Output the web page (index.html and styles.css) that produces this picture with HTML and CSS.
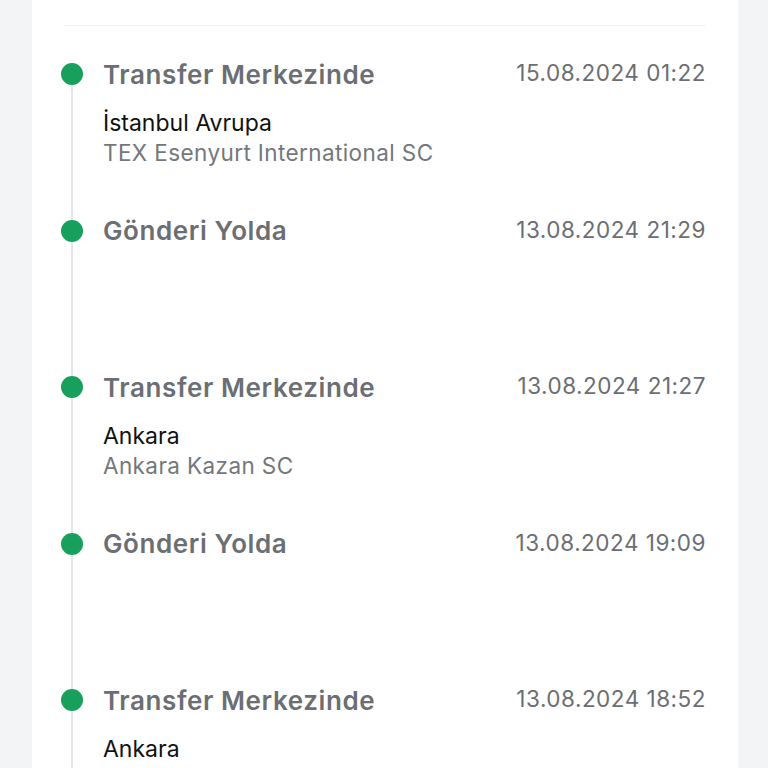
FILE: index.html
```html
<!DOCTYPE html>
<html lang="tr">
<head>
    <meta charset="UTF-8">
    <meta name="viewport" content="width=device-width, initial-scale=1.0">
    <title>Gönderi Takibi</title>
    <link rel="stylesheet" href="styles.css">
</head>
<body>

    <div class="card">
        <div class="divider"></div>

        <!-- Shipment movements -->
        <ul class="timeline">
            <li class="step">
                <div class="rail"><span class="dot"></span><span class="line"></span></div>
                <div class="info">
                    <div class="head">
                        <span class="status">Transfer Merkezinde</span>
                        <span class="date">15.08.2024 01:22</span>
                    </div>
                    <p class="city">İstanbul Avrupa</p>
                    <p class="branch">TEX Esenyurt International SC</p>
                </div>
            </li>
            <li class="step">
                <div class="rail"><span class="dot"></span><span class="line"></span></div>
                <div class="info">
                    <div class="head">
                        <span class="status">Gönderi Yolda</span>
                        <span class="date">13.08.2024 21:29</span>
                    </div>
                </div>
            </li>
            <li class="step">
                <div class="rail"><span class="dot"></span><span class="line"></span></div>
                <div class="info">
                    <div class="head">
                        <span class="status">Transfer Merkezinde</span>
                        <span class="date">13.08.2024 21:27</span>
                    </div>
                    <p class="city">Ankara</p>
                    <p class="branch">Ankara Kazan SC</p>
                </div>
            </li>
            <li class="step">
                <div class="rail"><span class="dot"></span><span class="line"></span></div>
                <div class="info">
                    <div class="head">
                        <span class="status">Gönderi Yolda</span>
                        <span class="date">13.08.2024 19:09</span>
                    </div>
                </div>
            </li>
            <li class="step">
                <div class="rail"><span class="dot"></span><span class="line"></span></div>
                <div class="info">
                    <div class="head">
                        <span class="status">Transfer Merkezinde</span>
                        <span class="date">13.08.2024 18:52</span>
                    </div>
                    <p class="city">Ankara</p>
                </div>
            </li>
        </ul>
    </div>

</body>
</html>
```

FILE: styles.css
```css
body {
    font-family: Inter, 'Noto Sans', sans-serif;
    background: #f3f4f6;
    margin: 0;
    height: 768px;
    overflow: hidden;
}

.card {
    background: white;
    margin: 0 30px 0 32px;
    padding: 0 32px;
    height: 768px;
}

.divider {
    height: 25px;
    border-bottom: 1px solid #f1f2f4;
}

.timeline {
    list-style: none;
    margin: 37px 0 0 -3px;
    padding: 0;
}

.step {
    display: flex;
    height: 156.5px;
}

.rail {
    width: 22px;
    display: flex;
    flex-direction: column;
    align-items: center;
    flex-shrink: 0;
}

.dot {
    width: 22px;
    height: 22px;
    border-radius: 50%;
    background: #16a05b;
    flex-shrink: 0;
}

.line {
    flex: 1;
    width: 2.5px;
    background: #e3e5e8;
}

.info {
    flex: 1;
    margin-left: 20px;
}

.head {
    display: flex;
    justify-content: space-between;
    align-items: center;
    height: 22px;
}

.status {
    font-size: 26px;
    font-weight: 600;
    letter-spacing: 0.6px;
    color: #6b6e73;
}

.date {
    font-size: 22.5px;
    letter-spacing: 0.5px;
    color: #6b6e73;
    margin-top: -3px;
}

.city,
.branch {
    margin: 0;
    line-height: 29px;
}

.city {
    margin-top: 24px;
    font-size: 23px;
    color: #111;
}

.branch {
    font-size: 22.5px;
    letter-spacing: 0.4px;
    color: #74777c;
}
```
